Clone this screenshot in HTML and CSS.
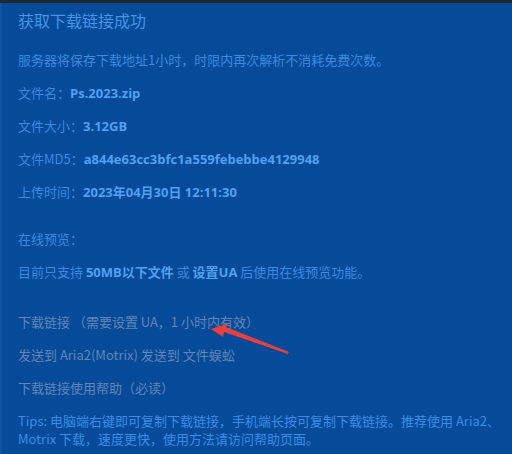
FILE: index.html
```html
<!DOCTYPE html>
<html lang="zh">
<head>
<meta charset="utf-8">
<link rel="stylesheet" href="styles.css">
</head>
<body>
<div class="topbar"></div>
<div class="panel">
  <h1 class="title">获取下载链接成功</h1>
  <p class="line first">服务器将保存下载地址1小时，时限内再次解析不消耗免费次数。</p>
  <p class="line">文件名：<b>Ps.2023.zip</b></p>
  <p class="line">文件大小：<b>3.12GB</b></p>
  <p class="line">文件MD5：<b>a844e63cc3bfc1a559febebbe4129948</b></p>
  <p class="line">上传时间：<b>2023年04月30日 12:11:30</b></p>
  <p class="line section">在线预览：</p>
  <p class="line">目前只支持 <b>50MB以下文件</b> 或 <b>设置UA</b> 后使用在线预览功能。</p>
  <p class="line dim section2">下载链接 （需要设置 UA，1 小时内有效）</p>
  <p class="line dim">发送到 Aria2(Motrix) 发送到 文件蜈蚣</p>
  <p class="line dim">下载链接使用帮助（必读）</p>
  <p class="tips">Tips: 电脑端右键即可复制下载链接，手机端长按可复制下载链接。推荐使用 Aria2、Motrix 下载，速度更快，使用方法请访问帮助页面。</p>
  <svg class="arrow" width="90" height="40" viewBox="0 0 90 40">
    <polygon points="2,8 20,2 17,6 80,31 79,33 15,11 14,16" fill="#e8403c"/>
  </svg>
</div>
</body>
</html>
```
FILE: styles.css
```css
html, body {
  margin: 0;
  padding: 0;
  background: #054b9a;
}
body {
  width: 512px;
  height: 454px;
  overflow: hidden;
  font-family: "Noto Sans CJK SC", "Noto Sans", sans-serif;
}
.topbar {
  height: 3px;
  background: #22262f;
}
.panel {
  position: relative;
  height: 451px;
  box-sizing: border-box;
  padding: 5px 10px 0 18px;
  border-left: 2px solid #0b56a9;
}
.title {
  margin: 0 0 0 -2px;
  font-size: 16px;
  line-height: 24px;
  font-weight: normal;
  color: #4795e4;
}
.line {
  margin: 13px 0 0 -2px;
  font-size: 13px;
  line-height: 20px;
  color: #3b8ade;
  white-space: nowrap;
}
.line.first {
  margin-top: 18px;
}
.line b {
  font-family: "Open Sans", "Noto Sans CJK SC", sans-serif;
  font-weight: 700;
  color: #52a1ef;
}
.line.section {
  margin-top: 27px;
}
.line.section2 {
  margin-top: 30px;
}
.line.dim {
  color: #6486b5;
}
.tips {
  margin: 14px 0 0 -2px;
  font-size: 13px;
  line-height: 18px;
  color: #3a8de6;
}
.arrow {
  position: absolute;
  left: 207px;
  top: 318px;
}
```
